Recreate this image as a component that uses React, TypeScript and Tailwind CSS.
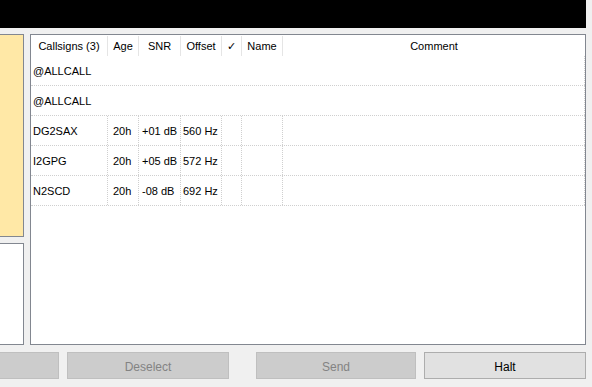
import React from "react";

const rows = [
  { call: "@ALLCALL", span: true },
  { call: "@ALLCALL", span: true },
  { call: "DG2SAX", age: "20h", snr: "+01 dB", offset: "560 Hz" },
  { call: "I2GPG", age: "20h", snr: "+05 dB", offset: "572 Hz" },
  { call: "N2SCD", age: "20h", snr: "-08 dB", offset: "692 Hz" },
];

const cell = "h-full border-r border-dotted border-[#cfcfcf] flex items-center whitespace-nowrap pt-[2px]";

export default function App() {
  return (
    <div
      className="w-[592px] h-[387px] bg-[#f0f0f0] text-[11px] text-black overflow-hidden"
      style={{ fontFamily: '"Liberation Sans", Arial, sans-serif' }}
    >
      <div className="w-[586px] h-[28px] bg-black" />

      <div className="flex mt-[6px] h-[311px]">
        <div className="w-[24px] flex flex-col">
          <div className="h-[203px] bg-[#ffe8a6] border border-l-0 border-[#828790]" />
          <div className="mt-[6px] h-[102px] bg-white border border-l-0 border-[#828790]" />
        </div>

        <div className="ml-[6px] w-[556px] h-[311px] bg-white border border-[#828790] flex flex-col">
          <div className="flex h-[21px] shrink-0 pt-[1px] whitespace-nowrap">
            <div className="w-[77px] border-r border-[#e5e5e5] flex items-center justify-center">Callsigns (3)</div>
            <div className="w-[31px] border-r border-[#e5e5e5] flex items-center justify-center">Age</div>
            <div className="w-[42px] border-r border-[#e5e5e5] flex items-center justify-center">SNR</div>
            <div className="w-[41px] border-r border-[#e5e5e5] flex items-center justify-center">Offset</div>
            <div className="w-[20px] border-r border-[#e5e5e5] flex items-center justify-center">✓</div>
            <div className="w-[41px] border-r border-[#e5e5e5] flex items-center justify-center">Name</div>
            <div className="flex-1 flex items-center justify-center">Comment</div>
          </div>

          {rows.map((r, i) => (
            <div key={i} className="flex h-[30px] shrink-0 border-b border-dotted border-[#cfcfcf]">
              {r.span ? (
                <div className="flex-1 h-full flex items-center pl-[2px] pt-[2px] border-r border-dotted border-[#cfcfcf]">
                  {r.call}
                </div>
              ) : (
                <>
                  <div className={`${cell} w-[77px] pl-[2px]`}>{r.call}</div>
                  <div className={`${cell} w-[31px] pl-[5px]`}>{r.age}</div>
                  <div className={`${cell} w-[42px] pl-[3px]`}>{r.snr}</div>
                  <div className={`${cell} w-[41px] pl-[2px]`}>{r.offset}</div>
                  <div className={`${cell} w-[20px]`} />
                  <div className={`${cell} w-[41px]`} />
                  <div className={`${cell} flex-1`} />
                </>
              )}
            </div>
          ))}
        </div>
      </div>

      <div className="flex mt-[7px] h-[27px] text-[12px]">
        <button className="w-[59px] h-full bg-[#cccccc] border border-l-0 border-[#bfbfbf]" />
        <button className="ml-[8px] w-[162px] h-full pt-[2px] bg-[#cccccc] border border-[#bfbfbf] text-[#838383]">
          Deselect
        </button>
        <button className="ml-[27px] w-[160px] h-full pt-[2px] bg-[#cccccc] border border-[#bfbfbf] text-[#838383]">
          Send
        </button>
        <button className="ml-[8px] w-[162px] h-full pt-[2px] bg-[#e1e1e1] border border-[#adadad] text-black">
          Halt
        </button>
      </div>
    </div>
  );
}
